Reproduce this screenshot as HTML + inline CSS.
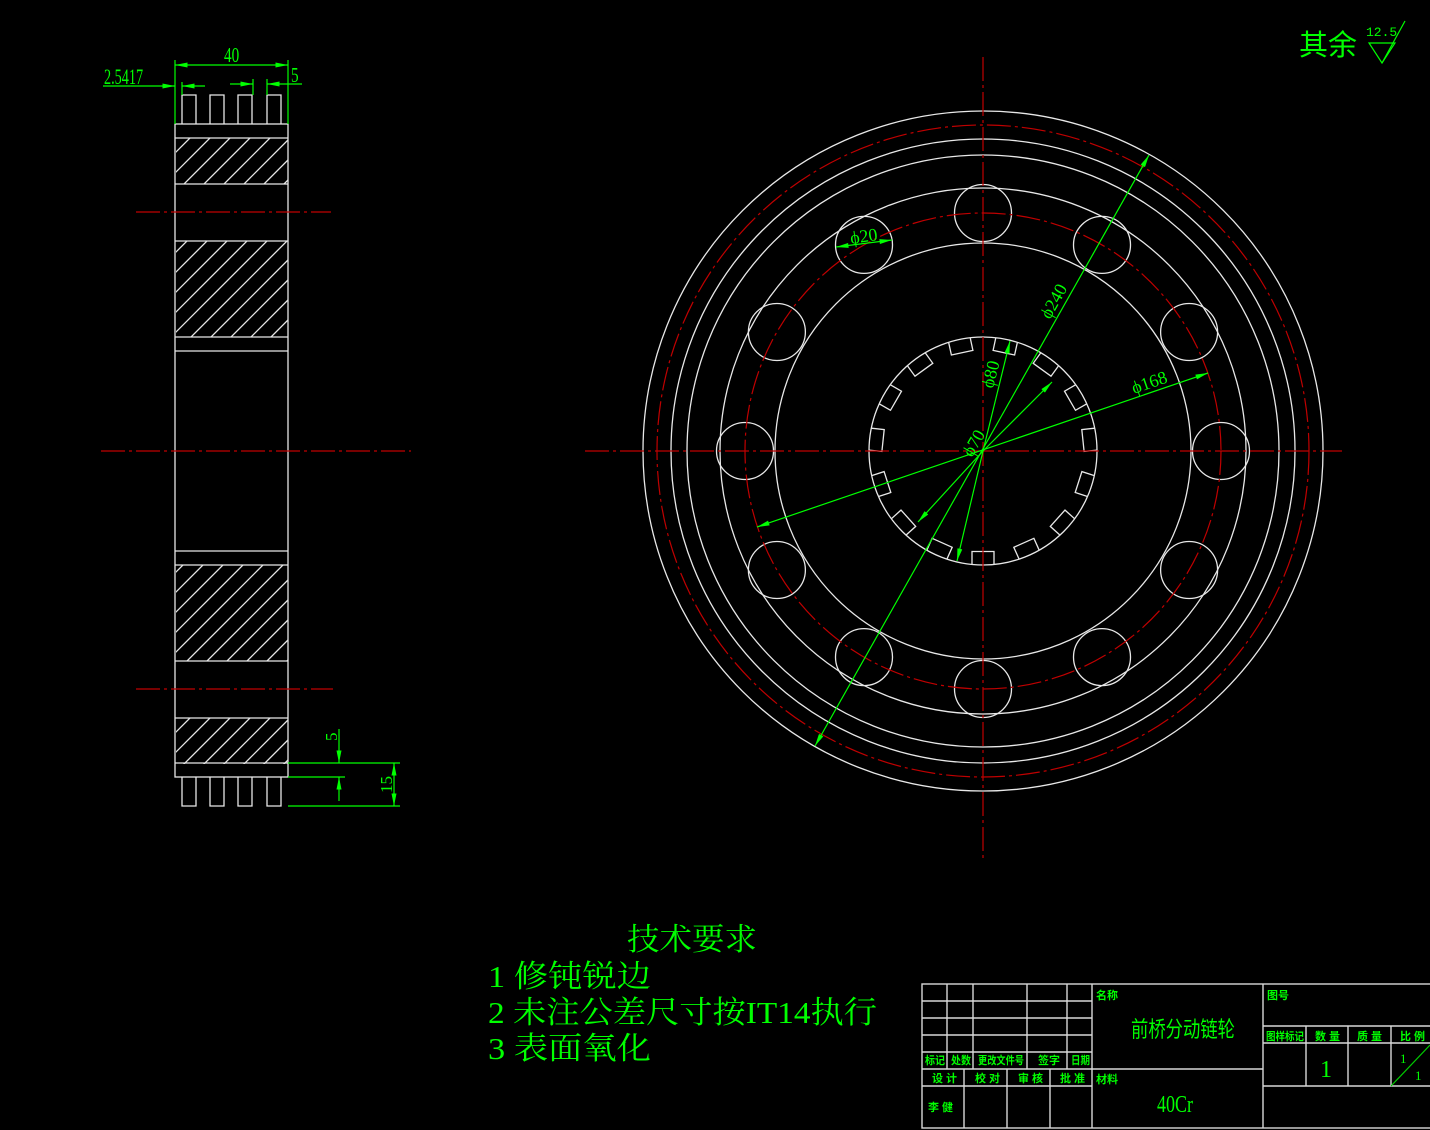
<!DOCTYPE html>
<html><head><meta charset="utf-8"><style>
html,body{margin:0;padding:0;background:#000;width:1430px;height:1130px;overflow:hidden}
svg{display:block}
text{font-family:"Liberation Serif","Noto Serif CJK SC","WenQuanYi Zen Hei",serif;fill:#00ff00}
.cn{font-family:"Liberation Sans","Noto Sans CJK SC","WenQuanYi Zen Hei",sans-serif}
.sr{font-family:"Liberation Serif","Noto Serif CJK SC",serif}
</style></head><body>
<svg id="s" width="1430" height="1130" viewBox="0 0 1430 1130" xmlns="http://www.w3.org/2000/svg">
<defs>
<clipPath id="h1"><rect x="176" y="138" width="112" height="46"/></clipPath>
<clipPath id="h2"><rect x="176" y="241" width="112" height="96"/></clipPath>
<clipPath id="h3"><rect x="176" y="565" width="112" height="96"/></clipPath>
<clipPath id="h4"><rect x="176" y="718" width="112" height="46"/></clipPath>
<marker id="ar" viewBox="0 0 10 4" refX="10" refY="2" markerWidth="14" markerHeight="5" markerUnits="userSpaceOnUse" orient="auto-start-reverse"><path d="M0,0L10,2L0,4z" fill="#00ff00"/></marker>
</defs>
<g id="geo" fill="none" stroke="#e8e8e8" stroke-width="1.3"></g>
<g stroke="#c00000" stroke-width="1.2" stroke-dasharray="24,4,3,4" fill="none">
<line x1="585" y1="451" x2="1342" y2="451"/>
<line x1="983" y1="57" x2="983" y2="862"/>
<line x1="101" y1="451" x2="411" y2="451"/>
<line x1="136" y1="212" x2="331" y2="212"/>
<line x1="136" y1="689" x2="333" y2="689"/>
<circle cx="983" cy="451" r="326"/>
<circle cx="983" cy="451" r="238"/>
</g>
<g stroke="#00ff00" stroke-width="1.2" fill="none">
<line x1="1149" y1="155" x2="815" y2="746" marker-start="url(#ar)" marker-end="url(#ar)"/>
<line x1="1208" y1="373" x2="757" y2="527" marker-start="url(#ar)" marker-end="url(#ar)"/>
<line x1="1010" y1="341" x2="983" y2="451" marker-start="url(#ar)"/>
<line x1="983" y1="451" x2="957" y2="561" marker-end="url(#ar)"/>
<line x1="1052" y1="382" x2="983" y2="451" marker-start="url(#ar)"/>
<line x1="983" y1="451" x2="918" y2="522" marker-end="url(#ar)"/>
<line x1="836" y1="247" x2="892" y2="240" marker-start="url(#ar)" marker-end="url(#ar)"/>
<line x1="175" y1="60" x2="175" y2="124"/>
<line x1="288" y1="60" x2="288" y2="124"/>
<line x1="175" y1="65" x2="288" y2="65" marker-start="url(#ar)" marker-end="url(#ar)"/>
<line x1="103" y1="86" x2="175" y2="86" marker-end="url(#ar)"/>
<line x1="182" y1="86" x2="205" y2="86" marker-start="url(#ar)"/>
<line x1="182" y1="82" x2="182" y2="95"/>
<line x1="230" y1="84" x2="253" y2="84" marker-end="url(#ar)"/>
<line x1="267" y1="84" x2="302" y2="84" marker-start="url(#ar)"/>
<line x1="253" y1="79" x2="253" y2="95"/>
<line x1="267" y1="79" x2="267" y2="95"/>
<line x1="288" y1="763" x2="400" y2="763"/>
<line x1="288" y1="777" x2="345" y2="777"/>
<line x1="288" y1="806" x2="400" y2="806"/>
<line x1="339" y1="729" x2="339" y2="763" marker-end="url(#ar)"/>
<line x1="339" y1="777" x2="339" y2="801" marker-start="url(#ar)"/>
<line x1="394" y1="763" x2="394" y2="806" marker-start="url(#ar)" marker-end="url(#ar)"/>
<path d="M1369,43 L1395,43 L1382,63 Z"/>
<line x1="1382" y1="63" x2="1405" y2="21"/>
</g>
<g font-size="20">
<text transform="translate(224,62) scale(0.8,1.1)" font-size="19">40</text>
<text transform="translate(104,84) scale(0.75,1.15)" font-size="19">2.5417</text>
<text transform="translate(291,82) scale(0.8,1.1)" font-size="19">5</text>
<text transform="translate(337,741) rotate(-90)" font-size="17">5</text>
<text transform="translate(392,793) rotate(-90)" font-size="17">15</text>
<text transform="translate(851,244) rotate(-8)" font-size="18">ϕ20</text>
<text transform="translate(1050,320) rotate(-61)" font-size="18">ϕ240</text>
<text transform="translate(1134,394) rotate(-19)" font-size="18">ϕ168</text>
<text transform="translate(993,389) rotate(-76)" font-size="18">ϕ80</text>
<text transform="translate(972,458) rotate(-60)" font-size="18">ϕ70</text>
<text x="1366" y="36" font-size="13" style="font-family:'Liberation Mono',monospace">12.5</text>
</g>
<text class="cn" x="1299" y="55" font-size="29">其余</text>
<g font-size="31">
<text class="sr" x="627" y="950" textLength="130" lengthAdjust="spacingAndGlyphs">技术要求</text>
<text class="sr" x="488" y="987" textLength="163" lengthAdjust="spacingAndGlyphs">1  修钝锐边</text>
<text class="sr" x="488" y="1023" textLength="389" lengthAdjust="spacingAndGlyphs">2  未注公差尺寸按IT14执行</text>
<text class="sr" x="488" y="1059" textLength="163" lengthAdjust="spacingAndGlyphs">3  表面氧化</text>
</g>
<g stroke="#d8d8d8" stroke-width="1.4" fill="none">
<rect x="922" y="984" width="510" height="144"/>
<line x1="922" y1="1001" x2="1092" y2="1001"/>
<line x1="922" y1="1018" x2="1092" y2="1018"/>
<line x1="922" y1="1035" x2="1092" y2="1035"/>
<line x1="922" y1="1052" x2="1092" y2="1052"/>
<line x1="922" y1="1069" x2="1263" y2="1069"/>
<line x1="922" y1="1086" x2="1092" y2="1086"/>
<line x1="947" y1="984" x2="947" y2="1069"/>
<line x1="973" y1="984" x2="973" y2="1069"/>
<line x1="1027" y1="984" x2="1027" y2="1069"/>
<line x1="1067" y1="984" x2="1067" y2="1069"/>
<line x1="964" y1="1069" x2="964" y2="1128"/>
<line x1="1007" y1="1069" x2="1007" y2="1128"/>
<line x1="1050" y1="1069" x2="1050" y2="1128"/>
<line x1="1092" y1="984" x2="1092" y2="1128"/>
<line x1="1263" y1="984" x2="1263" y2="1128"/>
<line x1="1263" y1="1026" x2="1430" y2="1026"/>
<line x1="1263" y1="1043" x2="1430" y2="1043"/>
<line x1="1263" y1="1086" x2="1430" y2="1086"/>
<line x1="1306" y1="1026" x2="1306" y2="1086"/>
<line x1="1348" y1="1026" x2="1348" y2="1086"/>
<line x1="1391" y1="1026" x2="1391" y2="1086"/>
</g>
<line x1="1391" y1="1086" x2="1430" y2="1045" stroke="#00cc00" stroke-width="1.2"/>
<g class="cn" font-size="11" font-weight="bold">
<text class="cn" x="925" y="1064" textLength="20" lengthAdjust="spacingAndGlyphs">标记</text><text class="cn" x="951" y="1064" textLength="20" lengthAdjust="spacingAndGlyphs">处数</text><text class="cn" x="978" y="1064" textLength="46" lengthAdjust="spacingAndGlyphs">更改文件号</text><text class="cn" x="1038" y="1064">签字</text><text class="cn" x="1071" y="1064" textLength="19" lengthAdjust="spacingAndGlyphs">日期</text>
<text class="cn" x="932" y="1082">设 计</text><text class="cn" x="975" y="1082">校 对</text><text class="cn" x="1018" y="1082">审 核</text><text class="cn" x="1060" y="1082">批 准</text>
<text class="cn" x="928" y="1111">李  健</text>
<text class="cn" x="1096" y="999">名称</text><text class="cn" x="1096" y="1083">材料</text>
<text class="cn" x="1267" y="999">图号</text>
<text class="cn" x="1266" y="1040" textLength="38" lengthAdjust="spacingAndGlyphs">图样标记</text><text class="cn" x="1315" y="1040">数 量</text><text class="cn" x="1357" y="1040">质 量</text><text class="cn" x="1400" y="1040">比 例</text>
</g>
<text class="cn" x="1131" y="1037" font-size="22" textLength="104" lengthAdjust="spacingAndGlyphs">前桥分动链轮</text>
<text x="1157" y="1112" font-size="24" textLength="36" lengthAdjust="spacingAndGlyphs">40Cr</text>
<text x="1320" y="1077" font-size="24">1</text>
<text x="1400" y="1063" font-size="13">1</text>
<text x="1415" y="1080" font-size="13">1</text>
</svg>
<script>
var g=document.getElementById('geo'),N='http://www.w3.org/2000/svg';
function el(t,a,p){var e=document.createElementNS(N,t);for(var k in a)e.setAttribute(k,a[k]);(p||g).appendChild(e);return e;}
var cx=983,cy=451;
[340,312,296,263,208,114].forEach(function(r){el('circle',{cx:cx,cy:cy,r:r});});
for(var i=0;i<12;i++){var a=i*Math.PI/6;el('circle',{cx:cx+238*Math.cos(a),cy:cy+238*Math.sin(a),r:28.5});}
for(var i=0;i<15;i++){var a=(90+24*i)*Math.PI/180,c=Math.cos(a),s=Math.sin(a),tx=-s,ty=c;
 var w=11,r1=Math.sqrt(114*114-w*w),r0=r1-13;
 var pts=[[r1,-w],[r0,-w],[r0,w],[r1,w]].map(function(p){return (cx+p[0]*c+p[1]*tx).toFixed(1)+','+(cy+p[0]*s+p[1]*ty).toFixed(1);});
 el('polyline',{points:pts.join(' ')});}
el('rect',{x:175,y:124,width:113,height:653});
[138,184,241,337,351,551,565,661,718,763].forEach(function(y){el('line',{x1:175,y1:y,x2:288,y2:y});});
[182,210,238,267].forEach(function(x){el('polyline',{points:x+',124 '+x+',95 '+(x+14)+',95 '+(x+14)+',124'});el('polyline',{points:x+',777 '+x+',806 '+(x+14)+',806 '+(x+14)+',777'});});
['h1','h2','h3','h4'].forEach(function(id){var gg=el('g',{'clip-path':'url(#'+id+')'});for(var k=-200;k<900;k+=20)el('line',{x1:175,y1:k+113,x2:288,y2:k},gg);});
</script>
</body></html>
